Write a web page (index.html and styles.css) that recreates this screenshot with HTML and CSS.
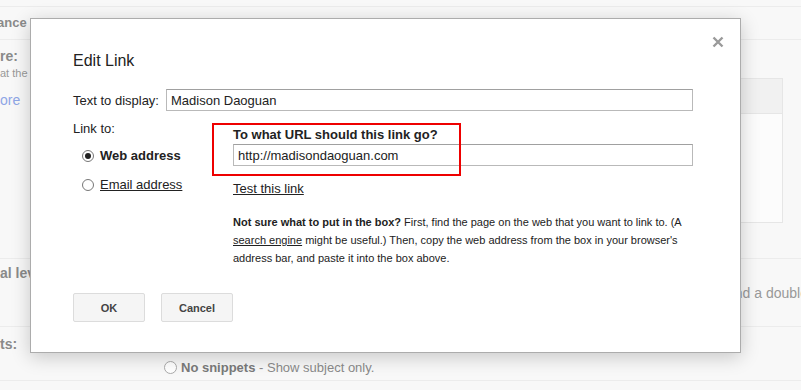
FILE: index.html
```html
<!DOCTYPE html>
<html lang="en">
<head>
  <meta charset="UTF-8" />
  <title>Edit Link</title>
  <link rel="stylesheet" href="styles.css">
</head>
<body>
  <!-- Settings page behind the dialog -->
  <div class="page">
    <div class="row row-top"></div>
    <div class="row row-b">
      <div class="label">ance settings:</div>
      <div class="row-note">You can change the way your conversations look.</div>
    </div>
    <div class="row row-c">
      <div class="label-col">
        <div class="label">re:</div>
        <div class="hint">at the end of</div>
        <div class="more">ore</div>
      </div>
      <div class="panel">
        <div class="panel-head"></div>
        <div class="panel-body"></div>
      </div>
    </div>
    <div class="row row-d">
      <div class="label">al level:</div>
      <div class="row-right">and a double-click</div>
    </div>
    <div class="row row-e">
      <div class="label">ts:</div>
      <div class="snippet">
        <span class="radio radio-faded"></span>
        <b>No snippets</b>&nbsp;- Show subject only.
      </div>
    </div>
    <div class="row row-f"></div>
  </div>

  <!-- Edit Link dialog -->
  <div class="dialog">
    <svg class="close" width="12" height="12" viewBox="0 0 12 12">
      <path d="M1.5 1.5 L10.5 10.5 M10.5 1.5 L1.5 10.5" stroke="#9a9a9a" stroke-width="2.4" />
    </svg>

    <h1 class="dialog-title">Edit Link</h1>

    <div class="display-row">
      <label class="display-label" for="displayText">Text to display:</label>
      <input id="displayText" class="field" type="text" value="Madison Daoguan" />
    </div>

    <div class="link-row">
      <div class="link-types">
        <div class="link-label">Link to:</div>
        <div class="choice choice-web">
          <span class="radio checked"></span>
          <b>Web address</b>
        </div>
        <div class="choice choice-email">
          <span class="radio"></span>
          <u>Email address</u>
        </div>
      </div>

      <div class="link-target">
        <div class="target-title">To what URL should this link go?</div>
        <input class="field url-field" type="text" value="http://madisondaoguan.com" />
        <div class="test-link"><u>Test this link</u></div>
        <p class="help">
          <b>Not sure what to put in the box?</b> First, find the page on the web that you want to link to. (A
          <u>search engine</u> might be useful.) Then, copy the web address from the box in your browser's
          address bar, and paste it into the box above.
        </p>
      </div>
    </div>

    <div class="buttons">
      <button class="btn">OK</button>
      <button class="btn">Cancel</button>
    </div>

    <!-- red annotation box -->
    <div class="highlight"></div>
  </div>
</body>
</html>
```

FILE: styles.css
```css
/********************************************************
 * Page behind the dialog
 ********************************************************/
body {
  margin: 0;
  width: 801px;
  height: 390px;
  overflow: hidden;
  position: relative;
  background-color: #f7f7f7;
  font-family: "Liberation Sans", Arial, sans-serif;
}

.row {
  display: flex;
  background-color: #f8f8f8;
  border-top: 1px solid #ececec;
  box-sizing: border-box;
  color: #8a8a8a;
  font-size: 13px;
}
.row-top {
  height: 6px;
  border-top: none;
}
.row-b {
  height: 33px;
  align-items: center;
  padding-bottom: 1px;
}
.row-c {
  height: 219px;
  justify-content: space-between;
}
.row-d {
  height: 68px;
}
.row-e {
  height: 54px;
}
.row-f {
  height: 20px;
}

.label {
  font-weight: bold;
  font-size: 14px;
  white-space: nowrap;
}
.row-b .label {
  width: 330px;
  margin-left: -3px;
  font-size: 13px;
}
.row-note {
  color: #999;
  white-space: nowrap;
}

.label-col {
  padding-top: 8px;
}
.hint {
  font-size: 11px;
  color: #999;
  margin-top: 3px;
  white-space: nowrap;
}
.more {
  color: #8fa6e6;
  font-size: 14px;
  margin-top: 13px;
}

.panel {
  width: 320px;
  margin: 38px 18px 0 0;
  height: 145px;
  border: 1px solid #e6e6e6;
  box-sizing: border-box;
  display: flex;
  flex-direction: column;
}
.panel-head {
  height: 34px;
  background-color: #f1f1f1;
  border-bottom: 1px solid #e6e6e6;
}
.panel-body {
  flex: 1;
  background-color: #fcfcfc;
}

.row-d .label {
  margin-top: 6px;
  width: 727px;
  flex: none;
}
.row-right {
  margin-top: 26px;
  color: #999;
  font-size: 14px;
  white-space: nowrap;
}

.row-e .label {
  margin-top: 9px;
  width: 164px;
}
.snippet {
  margin-top: 28px;
  display: flex;
  align-items: center;
  white-space: nowrap;
  color: #8a8a8a;
  font-size: 13px;
}
.snippet b {
  color: #7a7a7a;
  margin-left: 4px;
}

/********************************************************
 * Dialog
 ********************************************************/
.dialog {
  position: absolute;
  left: 30px;
  top: 18px;
  width: 711px;
  height: 335px;
  box-sizing: border-box;
  background-color: #fff;
  border: 1px solid #acacac;
  box-shadow: 0 4px 18px rgba(0,0,0,0.2);
  padding: 32px 47px 0 42px;
  font-size: 13px;
  color: #222;
}

.close {
  position: absolute;
  right: 16px;
  top: 17px;
}

.dialog-title {
  margin: 0;
  font-size: 16px;
  font-weight: normal;
  line-height: 20px;
}

.field {
  display: block;
  box-sizing: border-box;
  height: 22px;
  margin: 0;
  padding: 0 4px;
  border: 1px solid #b9b9b9;
  border-top-color: #a0a0a0;
  font-family: "Liberation Sans", Arial, sans-serif;
  font-size: 13px;
  color: #222;
  outline: none;
}

.display-row {
  display: flex;
  align-items: center;
  margin-top: 18px;
}
.display-label {
  width: 93px;
}
.display-row .field {
  flex: 1;
}

.link-row {
  display: flex;
  margin-top: 10px;
  line-height: 16px;
}

.link-types {
  width: 160px;
}
.choice {
  display: flex;
  align-items: center;
  padding-left: 9px;
}
.choice-web {
  margin-top: 11px;
}
.choice-email {
  margin-top: 13px;
}

.radio {
  width: 12px;
  height: 12px;
  box-sizing: border-box;
  border: 1px solid #777;
  border-radius: 50%;
  margin-right: 6px;
  position: relative;
  background-color: #fff;
}
.radio.checked::after {
  content: "";
  position: absolute;
  left: 2px;
  top: 2px;
  width: 6px;
  height: 6px;
  border-radius: 50%;
  background-color: #222;
}
.radio-faded {
  border-color: #aaa;
  width: 13px;
  height: 13px;
  margin-right: 0;
}

.link-target {
  flex: 1;
  padding-top: 6px;
}
.target-title {
  font-weight: bold;
  margin-bottom: 1px;
}
.url-field {
  width: 100%;
}
.test-link {
  margin-top: 15px;
}
.help {
  margin: 16px 0 0;
  font-size: 11px;
  line-height: 18px;
}

.buttons {
  display: flex;
  gap: 16px;
  margin-top: 26px;
}
.btn {
  width: 72px;
  height: 29px;
  background-color: #f5f5f5;
  border: 1px solid #dcdcdc;
  border-radius: 2px;
  font-family: "Liberation Sans", Arial, sans-serif;
  font-size: 11px;
  font-weight: bold;
  color: #444;
  cursor: pointer;
}

.highlight {
  position: absolute;
  left: 181px;
  top: 104px;
  width: 249px;
  height: 53px;
  box-sizing: border-box;
  border: 2px solid #e00;
}
```
